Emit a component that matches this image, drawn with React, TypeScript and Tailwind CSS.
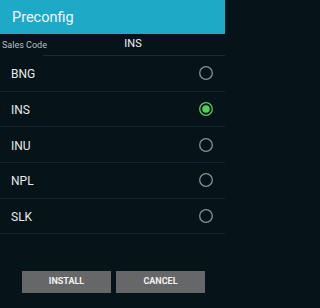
import React from "react";

const items = ["BNG", "INS", "INU", "NPL", "SLK"];

function Radio({ checked }: { checked: boolean }) {
  return (
    <svg width="16" height="16" viewBox="0 0 16 16">
      <circle
        cx="8"
        cy="8"
        r="6.3"
        fill="none"
        stroke={checked ? "#5cc95c" : "#8a9093"}
        strokeWidth="1.3"
      />
      {checked && <circle cx="8" cy="8" r="3.8" fill="#4fcf58" />}
    </svg>
  );
}

export default function App() {
  return (
    <div className="min-h-screen w-full bg-[#06141a]">
      <div
        className="w-[225px] h-[308px] bg-[#06141a] flex flex-col overflow-hidden"
        style={{ fontFamily: "Roboto, 'Liberation Sans', sans-serif" }}
      >
        <div className="h-[34px] bg-[#1eaac7] flex items-center pl-[12px] pt-[1px] text-[14.5px] text-[#eef8fb]">
          Preconfig
        </div>
        <div className="h-[22px] flex items-center">
          <div className="pl-[2px] pt-[1px] text-[9px] text-[#b9bec0] w-[43px] whitespace-nowrap">Sales Code</div>
          <div className="flex-1 h-full flex items-center justify-center border-b border-[#1c2b31] text-[11px] text-[#f2f2f2] pr-[2px]">
            INS
          </div>
        </div>
        <div className="flex flex-col">
          {items.map((it, i) => (
            <div
              key={it}
              className="h-[35.7px] flex items-center justify-between border-b border-[#16252b] pl-[11px] pr-[11px]"
            >
              <span className="text-[12px] text-[#e6e8e9] pt-[2px]">{it}</span>
              <Radio checked={i === 1} />
            </div>
          ))}
        </div>
        <div className="flex-1 flex items-end justify-center gap-[5px] pb-[15px] pl-[2px]">
          <button className="w-[89px] h-[22px] bg-[#666768] text-[9px] font-bold text-[#f0f0f0]">
            INSTALL
          </button>
          <button className="w-[89px] h-[22px] bg-[#666768] text-[9px] font-bold text-[#f0f0f0]">
            CANCEL
          </button>
        </div>
      </div>
    </div>
  );
}
